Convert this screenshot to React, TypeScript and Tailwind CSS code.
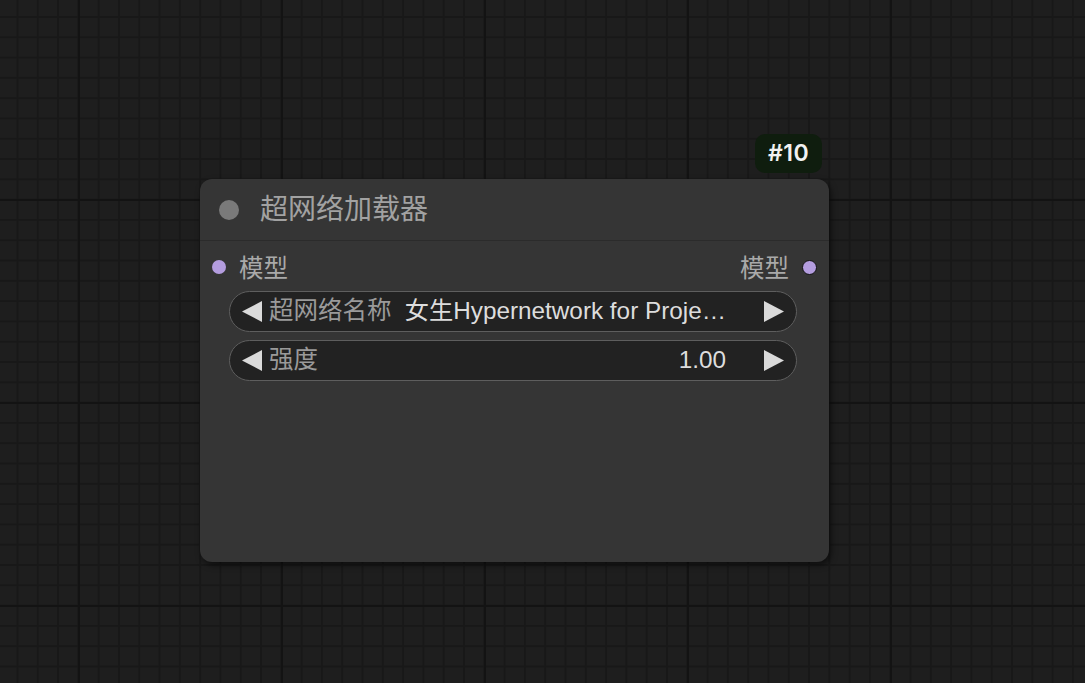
const FONT = "font-['Liberation_Sans','Noto_Sans_CJK_SC',sans-serif]";

function ArrowLeft() {
  return (
    <svg width="20" height="21" viewBox="0 0 20 21" className="shrink-0">
      <polygon points="20,0 20,21 0,10.5" fill="#dadada" />
    </svg>
  );
}

function ArrowRight() {
  return (
    <svg width="20" height="21" viewBox="0 0 20 21" className="shrink-0">
      <polygon points="0,0 0,21 20,10.5" fill="#dadada" />
    </svg>
  );
}

function ComboWidget({ label, value }: { label: string; value: string }) {
  return (
    <div className="flex h-[41px] items-center rounded-full border-[1.5px] border-[#5e5e5e] bg-[#222222] pl-[12px] pr-[12px]">
      <ArrowLeft />
      <span className="ml-[7px] text-[24.5px] leading-none text-[#9a9a9a] whitespace-nowrap">
        {label}
      </span>
      <span className="ml-auto mr-[38px] text-[24.3px] leading-none text-[#dddddd] whitespace-nowrap">
        {value}
      </span>
      <ArrowRight />
    </div>
  );
}

export default function App() {
  return (
    <div
      className={`relative h-[683px] w-[1085px] overflow-hidden bg-[#1e1e1e] ${FONT} [background-image:linear-gradient(to_right,#131313_2.5px,transparent_2.5px),linear-gradient(to_bottom,#131313_2.5px,transparent_2.5px),linear-gradient(to_right,#181818_1.5px,transparent_1.5px),linear-gradient(to_bottom,#181818_1.5px,transparent_1.5px)] [background-size:203px_203px,203px_203px,20.3px_20.3px,20.3px_20.3px] [background-position:78px_0,0_199px,16.5px_0,0_16px]`}
    >
      {/* node id badge */}
      <div className="absolute left-[755px] top-[134px] flex h-[39px] w-[67px] items-center justify-center rounded-[10px] bg-[#0f1d0e]">
        <span className="font-['Inter',sans-serif] text-[23px] font-semibold leading-none tracking-[0.5px] text-[#f2f2f2]">
          #10
        </span>
      </div>

      {/* node */}
      <div className="absolute left-[200px] top-[179px] flex h-[383px] w-[629px] flex-col rounded-[12px] bg-[#353535] shadow-[2px_3px_6px_rgba(0,0,0,0.55)]">
        <div className="flex h-[62px] items-center border-b border-[#2b2b2b] pl-[19px]">
          <div className="h-[20px] w-[20px] rounded-full bg-[#7a7a7a]" />
          <span className="ml-[21px] text-[28px] leading-none text-[#a2a2a2]">
            超网络加载器
          </span>
        </div>

        <div className="mt-[8px] flex h-[40px] items-center justify-between pl-[12px] pr-[12px]">
          <div className="flex items-center">
            <div className="mb-[4px] h-[14px] w-[14px] rounded-full bg-[#b49ddf]" />
            <span className="ml-[13px] text-[24.5px] leading-none text-[#a9a9a9]">模型</span>
          </div>
          <div className="flex items-center">
            <span className="mr-[13px] text-[24.5px] leading-none text-[#a9a9a9]">模型</span>
            <div className="mb-[4px] h-[15px] w-[15px] rounded-full border-[1.5px] border-[#111111] bg-[#b49ddf]" />
          </div>
        </div>

        <div className="mt-[2px] flex flex-col gap-[8px] pl-[29px] pr-[32px]">
          <ComboWidget label="超网络名称" value="女生Hypernetwork for Proje…" />
          <ComboWidget label="强度" value="1.00" />
        </div>
      </div>
    </div>
  );
}
